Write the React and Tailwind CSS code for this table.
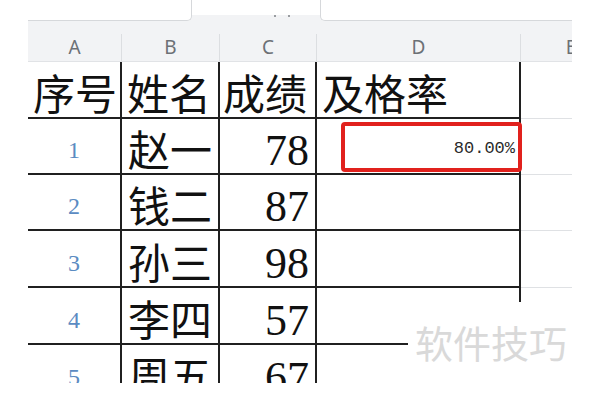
import React from "react";

const cjk = "font-['Noto_Sans_CJK_SC','Noto_Sans',sans-serif]";

function Row({ h, num, name, score, d }) {
  return (
    <div className={`flex shrink-0 ${h}`}>
      <div className="w-[94px] shrink-0 border-r-2 border-b-2 border-[#202020] flex items-center justify-center pt-[8px]">
        <span className="font-['Liberation_Serif',serif] text-[24px] leading-none text-[#5b8bc2]">{num}</span>
      </div>
      <div className="w-[98px] shrink-0 border-r-2 border-b-2 border-[#202020] flex items-center pl-[6px] pt-[4px]">
        <span className={`${cjk} text-[42px] leading-none text-[#111] whitespace-nowrap`}>{name}</span>
      </div>
      <div className="w-[97px] shrink-0 border-r-2 border-b-2 border-[#202020] flex items-center justify-end pr-[6px] pt-[10px]">
        <span className="font-['Liberation_Serif',serif] text-[44px] leading-none text-[#111]">{score}</span>
      </div>
      <div className="w-[204px] shrink-0 border-r-2 border-b-2 border-[#202020] relative">{d}</div>
      <div className="w-[100px] shrink-0 border-b border-[#dfe1e4]"></div>
    </div>
  );
}

export default function App() {
  const rows = [
    ["1", "赵一", "78", "h-[56px]"],
    ["2", "钱二", "87", "h-[56px]"],
    ["3", "孙三", "98", "h-[57px]"],
    ["4", "李四", "57", "h-[57px]"],
    ["5", "周五", "67", "h-[57px]"],
  ];
  return (
    <div className="w-[600px] h-[400px] bg-white overflow-hidden relative">
      <div className="ml-[28px] w-[544px] h-[383px] overflow-hidden flex flex-col">
        {/* tab strip */}
        <div className="h-[21px] shrink-0 flex bg-[linear-gradient(to_bottom,white_15px,#f2f3f5_15px)]">
          <div className="w-[164px] shrink-0 bg-white border-b border-r border-[#d6d8db] rounded-br-[5px]"></div>
          <div className="w-[128px] shrink-0 relative">
            <span className="absolute left-[82px] top-[15px] w-[2px] h-[2px] bg-[#9a9da1]"></span>
            <span className="absolute left-[96px] top-[15px] w-[2px] h-[2px] bg-[#9a9da1]"></span>
          </div>
          <div className="flex-1 bg-white border-b border-l border-[#d6d8db] rounded-bl-[5px]"></div>
        </div>
        {/* column header band */}
        <div className="h-[41px] shrink-0 bg-[#f2f3f5] border-b border-[#e1e3e6] flex pt-[13px] font-['Noto_Sans',sans-serif] text-[19px] text-[#6c7075]">
          <div className="w-[94px] shrink-0 border-r border-[#dcdee1] flex items-center justify-center">A</div>
          <div className="w-[98px] shrink-0 border-r border-[#dcdee1] flex items-center justify-center">B</div>
          <div className="w-[97px] shrink-0 border-r border-[#dcdee1] flex items-center justify-center">C</div>
          <div className="w-[204px] shrink-0 border-r border-[#dcdee1] flex items-center justify-center">D</div>
          <div className="w-[100px] shrink-0 flex items-center justify-center">E</div>
        </div>
        {/* header row */}
        <div className="flex shrink-0 h-[57px]">
          <div className={`w-[94px] shrink-0 border-r-2 border-b-2 border-[#202020] flex items-center pl-[5px] pt-[5px] ${cjk} text-[42px] leading-none text-[#111] whitespace-nowrap`}>序号</div>
          <div className={`w-[98px] shrink-0 border-r-2 border-b-2 border-[#202020] flex items-center pl-[5px] pt-[5px] ${cjk} text-[42px] leading-none text-[#111] whitespace-nowrap`}>姓名</div>
          <div className={`w-[97px] shrink-0 border-r-2 border-b-2 border-[#202020] flex items-center pl-[3px] pt-[5px] ${cjk} text-[42px] leading-none text-[#111] whitespace-nowrap`}>成绩</div>
          <div className={`w-[204px] shrink-0 border-r-2 border-b-2 border-[#202020] flex items-center pl-[5px] pt-[5px] ${cjk} text-[42px] leading-none text-[#111] whitespace-nowrap`}>及格率</div>
          <div className="w-[100px] shrink-0 border-b border-[#dfe1e4]"></div>
        </div>
        {rows.map(([n, name, s, h], i) => (
          <Row
            key={n}
            h={h}
            num={n}
            name={name}
            score={s}
            d={
              i === 0 ? (
                <div className="absolute left-[24px] top-[3px] w-[181px] h-[50px] border-[4px] border-[#e1211d] rounded-[4px] flex items-center justify-end pr-[3px] pt-[2px]">
                  <span className="font-['Liberation_Mono',monospace] text-[17px] leading-none text-[#2a2a2a]">80.00%</span>
                </div>
              ) : null
            }
          />
        ))}
      </div>
      {/* watermark patch */}
      <div className="absolute left-[408px] top-[302px] w-[192px] h-[98px] bg-white pl-[7px] pt-[21px]">
        <span className={`${cjk} text-[38px] leading-none text-[#d9d9d9] whitespace-nowrap`}>软件技巧</span>
      </div>
    </div>
  );
}
